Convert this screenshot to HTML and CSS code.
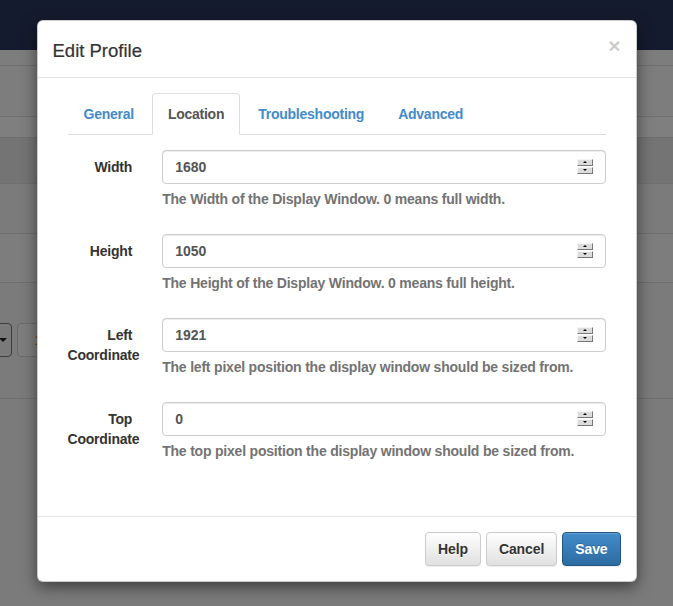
FILE: index.html
```html
<!DOCTYPE html>
<html>
<head>
<meta charset="utf-8">
<title>Edit Profile</title>
<link rel="stylesheet" href="styles.css">
</head>
<body>
<div class="page">
  <div class="navbar"></div>
  <div class="bg-row r0"></div>
  <div class="bg-row r1"></div>
  <div class="bg-row r2"></div>
  <div class="bg-row r3"></div>
  <div class="bg-row r4"></div>
  <div class="bg-row r5"></div>
  <div class="bg-row r6">
    <span class="bg-select"><span class="bg-caret"></span></span>
    <span class="bg-btn">1</span>
  </div>
</div>

<div class="modal">
  <div class="modal-dialog">
    <div class="modal-content">
      <div class="modal-header">
        <button type="button" class="close">×</button>
        <h4 class="modal-title">Edit Profile</h4>
      </div>
      <div class="modal-body">
        <div class="tab-wrap">
          <ul class="nav-tabs">
            <li><a>General</a></li>
            <li class="active"><a>Location</a></li>
            <li><a>Troubleshooting</a></li>
            <li><a>Advanced</a></li>
          </ul>
          <form class="tab-content form-horizontal">
            <div class="form-group">
              <label class="control-label">Width</label>
              <div class="field">
                <div class="form-control"><input type="text" value="1680"><span class="spin"><span class="spin-up"></span><span class="spin-down"></span></span></div>
                <p class="help-block">The Width of the Display Window. 0 means full width.</p>
              </div>
            </div>
            <div class="form-group">
              <label class="control-label">Height</label>
              <div class="field">
                <div class="form-control"><input type="text" value="1050"><span class="spin"><span class="spin-up"></span><span class="spin-down"></span></span></div>
                <p class="help-block">The Height of the Display Window. 0 means full height.</p>
              </div>
            </div>
            <div class="form-group">
              <label class="control-label">Left Coordinate</label>
              <div class="field">
                <div class="form-control"><input type="text" value="1921"><span class="spin"><span class="spin-up"></span><span class="spin-down"></span></span></div>
                <p class="help-block">The left pixel position the display window should be sized from.</p>
              </div>
            </div>
            <div class="form-group">
              <label class="control-label">Top Coordinate</label>
              <div class="field">
                <div class="form-control"><input type="text" value="0"><span class="spin"><span class="spin-up"></span><span class="spin-down"></span></span></div>
                <p class="help-block">The top pixel position the display window should be sized from.</p>
              </div>
            </div>
          </form>
        </div>
      </div>
      <div class="modal-footer">
        <button type="button" class="btn btn-default">Help</button>
        <button type="button" class="btn btn-default">Cancel</button>
        <button type="button" class="btn btn-primary">Save</button>
      </div>
    </div>
  </div>
</div>
</body>
</html>
```

FILE: styles.css
```css
* { box-sizing: border-box; }
html, body { margin: 0; padding: 0; }
body {
  font-family: "Liberation Sans", Arial, sans-serif;
  font-size: 14px;
  line-height: 1.42857;
  color: #333;
  background: #7b7b7b;
  width: 673px;
  height: 606px;
  overflow: hidden;
  position: relative;
}

/* greyed page behind the modal */
.navbar { height: 50px; background: #151b2e; }
.bg-row { border-bottom: 1px solid #6f6f6f; background: #7d7d7d; }
.r0 { height: 16px; }
.r1 { height: 51px; }
.r2 { height: 21px; background: #7f7f7f; }
.r3 { height: 46px; background: #747474; }
.r4 { height: 50px; background: #7b7b7b; }
.r5 { height: 49px; background: #7d7d7d; }
.r6 { height: 116px; padding-top: 40px; display: flex; gap: 5px; align-items: flex-start; background: #7b7b7b; }
.bg-select {
  width: 40px; height: 34px; margin-left: -28px;
  border: 1px solid #3c3c3c; border-radius: 4px; background: #7a7a7a;
  display: flex; align-items: center; justify-content: flex-end; padding-right: 4px;
}
.bg-caret { width: 0; height: 0; border-left: 4px solid transparent; border-right: 4px solid transparent; border-top: 4px solid #111; }
.bg-btn {
  height: 34px; padding: 6px 12px 6px 17px;
  border: 1px solid #6a6a6a; border-radius: 4px; background: #7e7e7e;
  color: #7a3e0e; font-weight: bold; line-height: 20px;
}

/* modal */
.modal { position: absolute; top: 0; left: 0; right: 0; bottom: 0; }
.modal-dialog { width: 600px; margin: 20px auto 0; }
.modal-content {
  background: #fff;
  border: 1px solid rgba(0,0,0,.2);
  border-radius: 6px;
  box-shadow: 0 5px 15px rgba(0,0,0,.5);
}
.modal-header { padding: 17px 15px 13px; border-bottom: 1px solid #e5e5e5; display: flex; flex-direction: row-reverse; justify-content: space-between; }
.modal-title { margin: 0; font-size: 18.5px; font-weight: normal; line-height: 25.7px; color: #333; -webkit-text-stroke: 0.2px #333; }
.close {
  padding: 0; border: 0; background: transparent; cursor: pointer;
  font-family: inherit; font-size: 21px; font-weight: bold; line-height: 1;
  color: #000; opacity: .2; margin-top: -3px; height: 21px;
}
.modal-body { padding: 15px; }
.tab-wrap { padding: 0 15px; }

.nav-tabs {
  list-style: none; margin: 0; padding: 0;
  display: flex; border-bottom: 1px solid #ddd;
}
.nav-tabs li { margin-bottom: -1px; margin-right: 2px; }
.nav-tabs a {
  display: block; padding: 10px 15px; line-height: 20px;
  border: 1px solid transparent; border-radius: 4px 4px 0 0;
  color: #428bca; font-weight: bold; letter-spacing: -0.25px;
}
.nav-tabs .active a { color: #555; background: #fff; border-color: #ddd #ddd transparent; }

.tab-content { padding: 15px 0; }
.form-group { display: flex; margin: 0 -15px 15px; }
.control-label {
  width: 16.6667%; padding: 7px 15px 0; text-align: right;
  font-weight: bold; line-height: 20px; letter-spacing: -0.2px;
}
.field { flex: 1; padding: 0 15px; }
.form-control {
  display: flex; align-items: center;
  height: 34px; padding: 6px 12px;
  border: 1px solid #ccc; border-radius: 4px;
  box-shadow: inset 0 1px 1px rgba(0,0,0,.075);
  background: #fff;
}
.form-control input {
  flex: 1; min-width: 0; border: 0; padding: 0; margin: 0; outline: none; background: transparent;
  font-family: inherit; font-size: 14px; font-weight: bold; color: #555; line-height: 20px;
}
.spin { display: flex; flex-direction: column; gap: 1px; width: 16px; margin-top: -1px; }
.spin-up, .spin-down {
  height: 7px; position: relative;
  background: #dcdcdc;
  border-style: solid; border-width: 1px;
  border-color: #f4f4f4 #777 #777 #f4f4f4;
}
.spin-up::after, .spin-down::after {
  content: ""; position: absolute; left: 5px; top: 1px;
  width: 0; height: 0;
  border-left: 2px solid transparent; border-right: 2px solid transparent;
}
.spin-up::after { border-bottom: 2px solid #000; }
.spin-down::after { border-top: 2px solid #000; }
.help-block { margin: 6px 0 9px; color: #737373; font-weight: bold; letter-spacing: -0.2px; }

.modal-footer { padding: 15px; border-top: 1px solid #e5e5e5; display: flex; justify-content: flex-end; gap: 5px; }
.btn {
  font-family: inherit; font-size: 14px; font-weight: bold; line-height: 20px;
  padding: 6px 12px; border: 1px solid; border-radius: 4px; cursor: pointer;
  letter-spacing: -0.1px;
}
.btn-default {
  color: #333; border-color: #ccc;
  background-image: linear-gradient(to bottom, #fff 0, #e0e0e0 100%);
  text-shadow: 0 1px 0 #fff;
  box-shadow: inset 0 1px 0 rgba(255,255,255,.15), 0 1px 1px rgba(0,0,0,.075);
}
.btn-primary {
  color: #fff; border-color: #245580;
  background-image: linear-gradient(to bottom, #428bca 0, #2d6ca2 100%);
  text-shadow: 0 -1px 0 rgba(0,0,0,.2);
  box-shadow: inset 0 1px 0 rgba(255,255,255,.15), 0 1px 1px rgba(0,0,0,.075);
}
```
